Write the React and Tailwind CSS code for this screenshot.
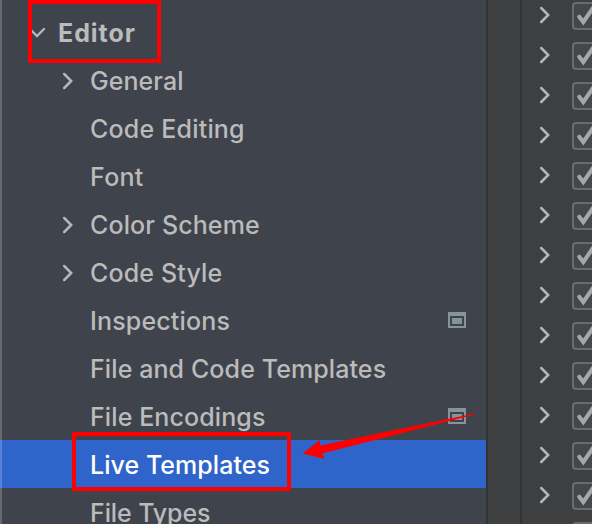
const items = [
  { label: 'General', expandable: true, tracking: 'tracking-[0.05px]' },
  { label: 'Code Editing', tracking: 'tracking-[0.2px]' },
  { label: 'Font', tracking: 'tracking-[0.3px]' },
  { label: 'Color Scheme', expandable: true, tracking: 'tracking-[0.12px]' },
  { label: 'Code Style', expandable: true, tracking: 'tracking-[0.14px]' },
  { label: 'Inspections', project: true, tracking: 'tracking-[0.16px]' },
  { label: 'File and Code Templates', tracking: 'tracking-[0.1px]' },
  { label: 'File Encodings', project: true, tracking: 'tracking-[0.1px]' },
  { label: 'Live Templates', selected: true, tracking: 'tracking-[0.05px]' },
  { label: 'File Types', tracking: 'tracking-[-0.1px]' },
];

const groups = Array.from({ length: 14 }, (_, i) => i);

function ChevronRight({ className = '' }) {
  return (
    <svg className={`h-[18px] w-3 shrink-0 ${className}`} viewBox="0 0 12 18" fill="none" stroke="#b4b6b8" strokeWidth="2.5" strokeLinecap="round" strokeLinejoin="miter">
      <path d="M2.2 2 L9.2 9 L2.2 16" />
    </svg>
  );
}

function ProjectIcon() {
  return (
    <svg className="mr-5 ml-auto h-4 w-[18px] shrink-0" viewBox="0 0 18 16" fill="#87939a">
      <path fillRule="evenodd" d="M0 0H18V16H0ZM2 4V14H16V4Z" />
      <path d="M4 6H14V12H4Z" />
    </svg>
  );
}

function TreeRow({ item }) {
  return (
    <div className={`flex h-12 shrink-0 items-center pl-[62px] ${item.selected ? 'bg-[#2f65ca] text-white' : ''}`}>
      <div className="w-7 shrink-0 pt-[2px]">{item.expandable && <ChevronRight />}</div>
      <span className={`pt-[2px] whitespace-nowrap ${item.tracking}`}>{item.label}</span>
      {item.project && <ProjectIcon />}
    </div>
  );
}

function Checkbox() {
  return (
    <svg className="ml-[21px] h-7 w-7 shrink-0" viewBox="0 0 28 28" fill="none">
      <rect x="1" y="1" width="26" height="26" rx="3" fill="#43494a" stroke="#6b6b6b" strokeWidth="2" />
      <path d="M7.300 14.800 L11.300 20 L21 6" stroke="#a7a7a7" strokeWidth="4" strokeLinecap="round" />
    </svg>
  );
}

export default function App() {
  return (
    <div className="relative flex h-[524px] w-[592px] overflow-hidden bg-[#3d3f41] font-['Inter','Liberation_Sans',sans-serif] text-[25px] leading-none font-[450] text-[#bbbbbb]">
      <aside className="relative flex w-[486px] shrink-0 flex-col overflow-hidden bg-[#3f434c] pt-2">
        <div className="flex h-12 shrink-0 items-center pl-[30px]">
          <svg className="h-3 w-[18px] shrink-0" viewBox="0 0 18 12" fill="none" stroke="#b4b6b8" strokeWidth="2.4" strokeLinecap="round">
            <path d="M0 3 L7 10 L14 3" />
          </svg>
          <span className="ml-[10px] pt-[2px] font-bold tracking-[0.95px]">Editor</span>
        </div>
        {items.map((item) => (
          <TreeRow key={item.label} item={item} />
        ))}
        <div className="absolute inset-y-0 left-0 w-[2px] bg-white/20" />
      </aside>
      <div className="w-[2px] shrink-0 bg-[#323232]" />
      <div className="w-8 shrink-0" />
      <div className="w-[2px] shrink-0 bg-[#323232]" />
      <main className="-mt-1 flex w-[70px] shrink-0 flex-col overflow-hidden">
        {groups.map((i) => (
          <div key={i} className="flex h-10 shrink-0 items-center pl-[17px]">
            <ChevronRight className="-mt-[2px]" />
            <Checkbox />
          </div>
        ))}
      </main>
      <div className="absolute top-0 left-7 h-[63px] w-[133px] border-4 border-[#ff0000]" />
      <div className="absolute top-[432px] left-[72px] h-[59px] w-[219px] border-4 border-[#ff0000]" />
      <svg className="absolute top-[405px] left-[295px] h-[60px] w-[190px]" viewBox="295 405 190 60" fill="#ff0000">
        <path d="M302.5 453.5 L320 440 L320 445.500 L474.500 413.500 L475 414.500 L322 453.500 L325 459 Z" />
      </svg>
    </div>
  );
}
